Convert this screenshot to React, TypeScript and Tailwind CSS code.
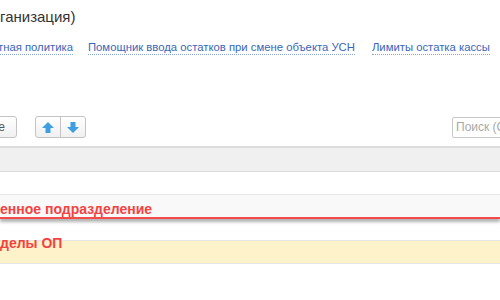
import React from "react";

function UpArrow() {
  return (
    <svg width="12" height="11" viewBox="0 0 12 11">
      <path d="M6 0 L12 6 L8.5 6 L8.5 11 L3.5 11 L3.5 6 L0 6 Z" fill="#3d9fe2" />
    </svg>
  );
}
function DownArrow() {
  return (
    <svg width="12" height="11" viewBox="0 0 12 11">
      <path d="M6 11 L12 5 L8.5 5 L8.5 0 L3.5 0 L3.5 5 L0 5 Z" fill="#3d9fe2" />
    </svg>
  );
}

export default function App() {
  return (
    <div className="w-[500px] h-[300px] overflow-hidden bg-white font-['Liberation_Sans',Arial,sans-serif]">
      <div className="pt-[7px] h-[28px] text-[15px] leading-[20px] text-[#333] whitespace-nowrap">ганизация)</div>
      <div className="mt-[12px] flex text-[11.3px] leading-[14px] text-[#3a66b9] whitespace-nowrap">
        <span className="ml-[-2px] border-b border-dotted border-[#8aa6d6]">тная политика</span>
        <span className="ml-[15px] border-b border-dotted border-[#8aa6d6]">Помощник ввода остатков при смене объекта УСН</span>
        <span className="ml-[17px] border-b border-dotted border-[#8aa6d6]">Лимиты остатка кассы</span>
      </div>
      <div className="mt-[61px] flex items-center h-[22px]">
        <div className="ml-[-20px] w-[37px] h-[22px] border border-[#c4c4c4] rounded-[3px] bg-gradient-to-b from-white to-[#f0f0f0] text-[12px] leading-[20px] text-[#555] text-right pr-[11px]">е</div>
        <div className="ml-[18px] flex h-[22px] border border-[#c4c4c4] rounded-[3px] bg-gradient-to-b from-white to-[#f0f0f0]">
          <div className="w-[25px] flex items-center justify-center border-r border-[#c4c4c4]"><UpArrow /></div>
          <div className="w-[24px] flex items-center justify-center"><DownArrow /></div>
        </div>
        <div className="flex-1" />
        <div className="w-[100px] mr-[-52px] h-[21px] border border-[#c8c8c8] rounded-[2px] text-[12px] leading-[19px] text-[#a8a8a8] pl-[3px] whitespace-nowrap">Поиск (Ctrl+F)</div>
      </div>
      <div className="mt-[8px] h-[26px] border-t-2 border-b border-[#dcdcdc] bg-[#f0f0f0]" />
      <div className="mt-[22px] h-[25px] border-t border-[#e6e6e6] bg-[#f9f9f9] border-b-2 border-b-[#f44a4a] shadow-[0_3px_3px_rgba(0,0,0,0.3)]">
        <div className="text-[14px] font-bold leading-[16px] pt-[6px] text-[#f34242] whitespace-nowrap">енное подразделение</div>
      </div>
      <div className="mt-[21px] h-[24px] border-y border-[#e6e6e6] bg-[#fdf2c9]">
        <div className="text-[14px] font-bold leading-[16px] mt-[-6px] text-[#f34242] whitespace-nowrap">делы ОП</div>
      </div>
    </div>
  );
}
